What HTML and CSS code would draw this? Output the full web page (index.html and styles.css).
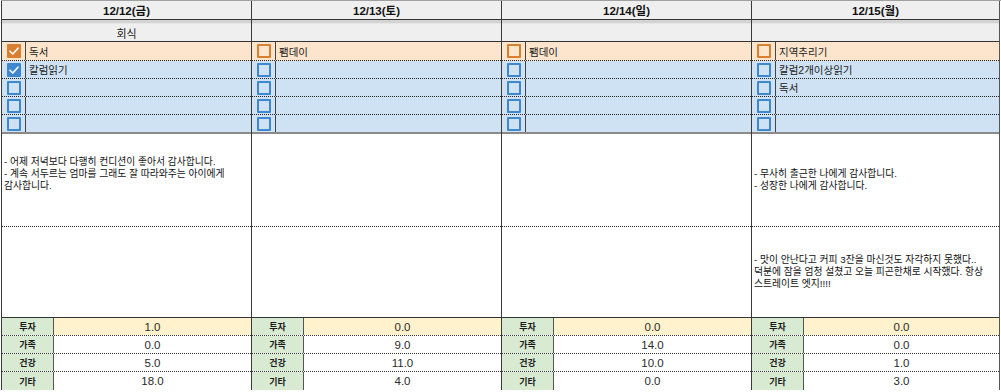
FILE: index.html
```html
<!DOCTYPE html>
<html lang="ko">
<head>
<meta charset="utf-8">
<link rel="stylesheet" href="styles.css">
</head>
<body>
<div class="board">
  <!-- Day 1 -->
  <section class="day">
    <div class="hdr">12/12(금)</div>
    <div class="band"></div>
    <div class="event">회식</div>
    <div class="tasks">
      <div class="task main"><span class="cb"><span class="box orange checked"><svg viewBox="0 0 14 14"><path d="M3 7.2 L5.8 10 L11 4.2" /></svg></span></span><span class="tx">독서</span></div>
      <div class="task"><span class="cb"><span class="box blue checked"><svg viewBox="0 0 14 14"><path d="M3 7.2 L5.8 10 L11 4.2" /></svg></span></span><span class="tx">칼럼읽기</span></div>
      <div class="task"><span class="cb"><span class="box blue"></span></span><span class="tx"></span></div>
      <div class="task"><span class="cb"><span class="box blue"></span></span><span class="tx"></span></div>
      <div class="task last"><span class="cb"><span class="box blue"></span></span><span class="tx"></span></div>
    </div>
    <div class="note first"><p>- 어제 저녁보다 다행히 컨디션이 좋아서 감사합니다.<br>- 계속 서두르는 엄마를 그래도 잘 따라와주는 아이에게<br>감사합니다.<br>&nbsp;</p></div>
    <div class="note second"><p></p></div>
    <div class="stats">
      <div class="stat hi"><span class="lb">투자</span><span class="val">1.0</span></div>
      <div class="stat"><span class="lb">가족</span><span class="val">0.0</span></div>
      <div class="stat"><span class="lb">건강</span><span class="val">5.0</span></div>
      <div class="stat"><span class="lb">기타</span><span class="val">18.0</span></div>
    </div>
  </section>
  <!-- Day 2 -->
  <section class="day">
    <div class="hdr">12/13(토)</div>
    <div class="band"></div>
    <div class="event"></div>
    <div class="tasks">
      <div class="task main"><span class="cb"><span class="box orange"></span></span><span class="tx">팸데이</span></div>
      <div class="task"><span class="cb"><span class="box blue"></span></span><span class="tx"></span></div>
      <div class="task"><span class="cb"><span class="box blue"></span></span><span class="tx"></span></div>
      <div class="task"><span class="cb"><span class="box blue"></span></span><span class="tx"></span></div>
      <div class="task last"><span class="cb"><span class="box blue"></span></span><span class="tx"></span></div>
    </div>
    <div class="note first"><p></p></div>
    <div class="note second"><p></p></div>
    <div class="stats">
      <div class="stat hi"><span class="lb">투자</span><span class="val">0.0</span></div>
      <div class="stat"><span class="lb">가족</span><span class="val">9.0</span></div>
      <div class="stat"><span class="lb">건강</span><span class="val">11.0</span></div>
      <div class="stat"><span class="lb">기타</span><span class="val">4.0</span></div>
    </div>
  </section>
  <!-- Day 3 -->
  <section class="day">
    <div class="hdr">12/14(일)</div>
    <div class="band"></div>
    <div class="event"></div>
    <div class="tasks">
      <div class="task main"><span class="cb"><span class="box orange"></span></span><span class="tx">팸데이</span></div>
      <div class="task"><span class="cb"><span class="box blue"></span></span><span class="tx"></span></div>
      <div class="task"><span class="cb"><span class="box blue"></span></span><span class="tx"></span></div>
      <div class="task"><span class="cb"><span class="box blue"></span></span><span class="tx"></span></div>
      <div class="task last"><span class="cb"><span class="box blue"></span></span><span class="tx"></span></div>
    </div>
    <div class="note first"><p></p></div>
    <div class="note second"><p></p></div>
    <div class="stats">
      <div class="stat hi"><span class="lb">투자</span><span class="val">0.0</span></div>
      <div class="stat"><span class="lb">가족</span><span class="val">14.0</span></div>
      <div class="stat"><span class="lb">건강</span><span class="val">10.0</span></div>
      <div class="stat"><span class="lb">기타</span><span class="val">0.0</span></div>
    </div>
  </section>
  <!-- Day 4 -->
  <section class="day lastday">
    <div class="hdr">12/15(월)</div>
    <div class="band"></div>
    <div class="event"></div>
    <div class="tasks">
      <div class="task main"><span class="cb"><span class="box orange"></span></span><span class="tx">지역추리기</span></div>
      <div class="task"><span class="cb"><span class="box blue"></span></span><span class="tx">칼럼2개이상읽기</span></div>
      <div class="task"><span class="cb"><span class="box blue"></span></span><span class="tx">독서</span></div>
      <div class="task"><span class="cb"><span class="box blue"></span></span><span class="tx"></span></div>
      <div class="task last"><span class="cb"><span class="box blue"></span></span><span class="tx"></span></div>
    </div>
    <div class="note first"><p>- 무사히 출근한 나에게 감사합니다.<br>- 성장한 나에게 감사합니다.</p></div>
    <div class="note second"><p>- 맛이 안난다고 커피 3잔을 마신것도 자각하지 못했다..<br>덕분에 잠을 엄청 설쳤고 오늘 피곤한채로 시작했다. 항상<br>스트레이트 엣지!!!!</p></div>
    <div class="stats">
      <div class="stat hi"><span class="lb">투자</span><span class="val">0.0</span></div>
      <div class="stat"><span class="lb">가족</span><span class="val">0.0</span></div>
      <div class="stat"><span class="lb">건강</span><span class="val">1.0</span></div>
      <div class="stat"><span class="lb">기타</span><span class="val">3.0</span></div>
    </div>
  </section>
</div>
</body>
</html>
```
FILE: styles.css
```css
* { box-sizing: border-box; }
html, body { margin: 0; padding: 0; background: #ffffff; }
body {
  font-family: "Liberation Sans", "Noto Sans CJK KR", sans-serif;
  color: #111;
  width: 1001px;
  height: 392px;
  overflow: hidden;
}
.board {
  display: grid;
  grid-template-columns: 250px 250px 250px 249px;
  margin-left: 1px;
  border-top: 1px solid #a0a0a0;
}
.day {
  display: flex;
  flex-direction: column;
  border-left: 1px solid #3a3a3a;
}
.day.lastday { border-right: 1px solid #555; }
.hdr {
  height: 19px;
  background: #efefef;
  border-bottom: 1px solid #333;
  display: flex;
  align-items: center;
  justify-content: center;
  font-weight: bold;
  font-size: 11.5px;
  color: #111;
}
.band {
  height: 4px;
  background: #d4d4d4;
  border-bottom: 1px solid #e6e6e6;
}
.event {
  height: 18px;
  background: #efefef;
  border-bottom: 1px solid #333;
  display: flex;
  align-items: center;
  justify-content: center;
  font-size: 11px;
  color: #1a1a1a;
}
.tasks { display: flex; flex-direction: column; }
.task {
  display: flex;
  height: 18px;
  background: #cfe2f3;
  border-bottom: 1px dotted #222;
}
.task.main { background: #fde5cd; height: 19px; }
.task.last { border-bottom: 2px solid #8a8a8a; height: 19px; }
.cb {
  width: 24px;
  flex: none;
  border-right: 1px solid #444;
  display: flex;
  align-items: center;
  justify-content: center;
}
.box {
  width: 14px;
  height: 14px;
  border: 2px solid #3d85c6;
  border-radius: 1px;
  display: block;
  position: relative;
}
.box.orange { border-color: #d8802f; }
.box.blue { border-color: #3f88d0; }
.box.checked.orange { background: #d8802f; }
.box.checked.blue { background: #3f88d0; }
.box svg {
  position: absolute;
  left: -2px;
  top: -2px;
  width: 14px;
  height: 14px;
}
.box svg path {
  fill: none;
  stroke: #ffffff;
  stroke-width: 1.6;
  stroke-linecap: round;
  stroke-linejoin: round;
}
.tx {
  padding-left: 3px;
  display: flex;
  align-items: center;
  font-size: 10.5px;
  color: #1a1a1a;
}
.note {
  display: flex;
  align-items: center;
  padding-left: 2px;
  font-size: 9.8px;
  line-height: 12px;
  color: #111;
}
.note p { margin: 0; }
.note.first { height: 93px; border-bottom: 1px dotted #222; }
.note.second { height: 91px; border-bottom: 1px solid #333; }
.stats { display: flex; flex-direction: column; }
.stat {
  display: flex;
  height: 18px;
  border-bottom: 1px dotted #333;
}
.stat:last-child { border-bottom: none; }
.lb {
  width: 52px;
  flex: none;
  background: #d9ead3;
  border-right: 1px solid #555;
  display: flex;
  align-items: center;
  justify-content: center;
  font-size: 9px;
  font-weight: bold;
  color: #1a1a1a;
}
.val {
  flex: 1;
  display: flex;
  align-items: center;
  justify-content: center;
  font-size: 11.5px;
  color: #2a2a2a;
}
.stat.hi .val { background: #fff2cc; }
```
